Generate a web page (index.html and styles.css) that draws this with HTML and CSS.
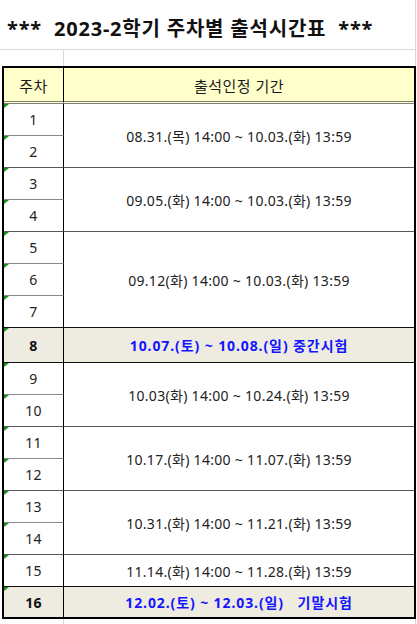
FILE: index.html
```html
<!DOCTYPE html>
<html lang="ko">
<head>
<meta charset="utf-8">
<title>2023-2학기 주차별 출석시간표</title>
<link rel="stylesheet" href="styles.css">
</head>
<body>
<div class="sheet">
  <div class="title-row"><h1 class="title">***  2023-2학기 주차별 출석시간표  ***</h1></div>
  <div class="spacer-row"><div class="sp1"></div><div class="sp2"></div></div>
  <div class="tbl">
    <div class="hd c1">주차</div>
    <div class="hd c2">출석인정 기간</div>

    <div class="wk inner">1</div>
    <div class="per span2">08.31.(목) 14:00 ~ 10.03.(화) 13:59</div>
    <div class="wk group">2</div>

    <div class="wk inner">3</div>
    <div class="per span2">09.05.(화) 14:00 ~ 10.03.(화) 13:59</div>
    <div class="wk group">4</div>

    <div class="wk inner">5</div>
    <div class="per span3 dark">09.12(화) 14:00 ~ 10.03.(화) 13:59</div>
    <div class="wk inner">6</div>
    <div class="wk group dark">7</div>

    <div class="wk exam dark">8</div>
    <div class="per exam dark">10.07.(토) ~ 10.08.(일) 중간시험</div>

    <div class="wk inner">9</div>
    <div class="per span2">10.03(화) 14:00 ~ 10.24.(화) 13:59</div>
    <div class="wk group">10</div>

    <div class="wk inner">11</div>
    <div class="per span2">10.17.(화) 14:00 ~ 11.07.(화) 13:59</div>
    <div class="wk group">12</div>

    <div class="wk inner">13</div>
    <div class="per span2">10.31.(화) 14:00 ~ 11.21.(화) 13:59</div>
    <div class="wk group">14</div>

    <div class="wk group dark">15</div>
    <div class="per dark">11.14.(화) 14:00 ~ 11.28.(화) 13:59</div>

    <div class="wk exam last">16</div>
    <div class="per exam last">12.02.(토) ~ 12.03.(일)   기말시험</div>
  </div>
  <div class="after-row"><div class="sp1"></div><div class="sp2"></div></div>
</div>
</body>
</html>
```

FILE: styles.css
```css
html, body {
  margin: 0;
  padding: 0;
  background: #ffffff;
}

body {
  font-family: "Noto Sans", "Noto Sans CJK KR", sans-serif;
  color: #222222;
}

.sheet {
  width: 416px;
}

.title-row {
  box-sizing: border-box;
  height: 50px;
  border-bottom: 1px solid #d9d9d9;
  border-right: 1px solid #d9d9d9;
  display: flex;
  align-items: center;
  padding-left: 7px;
  padding-top: 8px;
}

.title {
  margin: 0;
  font-size: 20px;
  font-weight: 700;
  color: #111111;
  white-space: pre;
  line-height: 1;
  letter-spacing: 0.8px;
}

.spacer-row,
.after-row {
  display: grid;
  grid-template-columns: 64px 1fr;
  height: 16px;
}

.after-row {
  height: 6px;
}

.sp1,
.sp2 {
  border-right: 1px solid #d9d9d9;
}

.tbl {
  box-sizing: border-box;
  margin-left: 2px;
  width: 414px;
  border: 2px solid #000000;
  display: grid;
  grid-template-columns: 60px 1fr;
  grid-template-rows: 36px repeat(7, 32px) 35px repeat(7, 32px) 30px;
}

.tbl > div {
  box-sizing: border-box;
  display: flex;
  align-items: center;
  justify-content: center;
  font-size: 14px;
  letter-spacing: 0.3px;
  white-space: pre;
}

.tbl > .hd {
  background: #ffffcc;
  border-bottom: 3px double #7f7f7a;
  color: #1a1a1a;
  font-size: 15px;
  letter-spacing: 0.5px;
  padding-top: 1px;
}

.c1,
.wk {
  grid-column: 1;
  border-right: 1px solid #000000;
}

.c2,
.per {
  grid-column: 2;
}

.wk {
  position: relative;
}

.wk::before {
  content: "";
  position: absolute;
  top: 0;
  left: 0;
  width: 0;
  height: 0;
  border-top: 4px solid #1e8c1e;
  border-right: 5px solid transparent;
}

.inner {
  border-bottom: 1px solid #8a8a8a;
}

.group,
.per {
  border-bottom: 1px solid #5a5a5a;
}

.dark {
  border-bottom-color: #111111 !important;
}

.span2 {
  grid-row: span 2;
}

.span3 {
  grid-row: span 3;
}

.exam {
  background: #eeece1;
  font-weight: 700;
  border-bottom: 1px solid #111111;
}

.tbl > .per.exam {
  color: #1414ff;
  letter-spacing: 0.9px;
}

.wk.exam {
  color: #111111;
}

.last {
  border-bottom: none;
}
```
